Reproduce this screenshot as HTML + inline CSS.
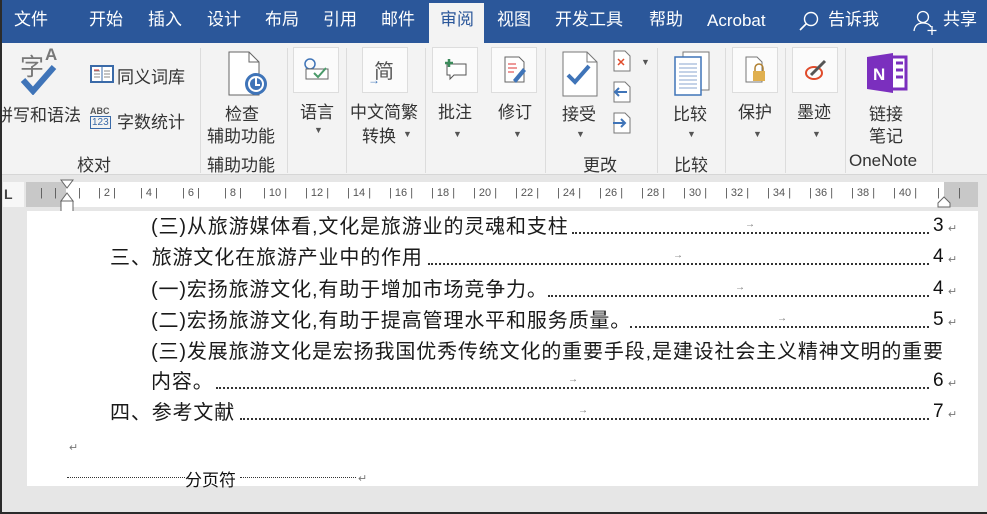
<!DOCTYPE html>
<html><head><meta charset="utf-8">
<style>
*{margin:0;padding:0;box-sizing:border-box}
body{width:987px;height:514px;overflow:hidden;background:#e6e6e6;font-family:"Liberation Sans","Noto Sans CJK SC",sans-serif;position:relative;color:#222}
.a{position:absolute;white-space:nowrap}
#tabs{position:absolute;left:0;top:0;width:987px;height:43px;background:#2b579a}
.t{position:absolute;top:8px;color:#fff;font-size:17px;line-height:24px;height:24px}
#act{position:absolute;left:429px;top:3px;width:55px;height:40px;background:#f3f3f3}
#rib{position:absolute;left:0;top:43px;width:987px;height:132px;background:#f3f3f3;border-bottom:1px solid #d6d6d6}
.r{position:absolute;font-size:17px;color:#333;white-space:nowrap}
.sep{position:absolute;top:5px;width:1px;height:125px;background:#dcdcdc}
.gl{position:absolute;top:108px;font-size:17px;color:#333}
.box{position:absolute;top:4px;width:46px;height:46px;background:#fbfbfb;border:1px solid #ddd}
.ar{position:absolute;font-size:9px;color:#555}
#ruler{position:absolute;left:26px;top:182px;width:952px;height:25px;background:#c8c8c8}
#rw{position:absolute;left:40px;top:0;width:878px;height:25px;background:#fff}
#page{position:absolute;left:27px;top:211px;width:951px;height:275px;background:#fff}
.l{position:absolute;font-size:20px;letter-spacing:0.85px;color:#1a1a1a;white-space:nowrap;height:26px;line-height:26px}
.ld{position:absolute;border-bottom:2px dotted #333;height:2px}
.pn{position:absolute;font-size:19px;color:#111}
.ret{position:absolute;font-size:11px;color:#777}
.tab{position:absolute;font-size:10px;color:#777}
</style></head><body>
<div style="position:absolute;left:0;top:0;width:2px;height:514px;background:#2b2b2b;z-index:5"></div>
<div style="position:absolute;left:0;top:512px;width:987px;height:2px;background:#2b2b2b;z-index:5"></div>
<div id="tabs">
<div id="act"></div>
<span class="t" style="left:14px">文件</span>
<span class="t" style="left:89px">开始</span>
<span class="t" style="left:148px">插入</span>
<span class="t" style="left:207px">设计</span>
<span class="t" style="left:265px">布局</span>
<span class="t" style="left:323px">引用</span>
<span class="t" style="left:381px">邮件</span>
<span class="t" style="left:440px;color:#2b579a">审阅</span>
<span class="t" style="left:497px">视图</span>
<span class="t" style="left:555px">开发工具</span>
<span class="t" style="left:649px">帮助</span>
<span class="t" style="left:707px;top:9px">Acrobat</span>
<svg class="a" style="left:797px;top:10px" width="24" height="22"><circle cx="14" cy="9" r="6.5" fill="none" stroke="#fff" stroke-width="1.4"/><line x1="9.5" y1="13.5" x2="3" y2="20" stroke="#fff" stroke-width="1.6"/></svg>
<span class="t" style="left:828px">告诉我</span>
<svg class="a" style="left:912px;top:9px" width="26" height="26"><circle cx="11" cy="8" r="5.5" fill="none" stroke="#fff" stroke-width="1.3"/><path d="M2 22 Q3 14 11 14 Q17 14 19 18" fill="none" stroke="#fff" stroke-width="1.3"/><path d="M20 17v9M15.5 21.5h9" stroke="#fff" stroke-width="1.3"/></svg>
<span class="t" style="left:943px">共享</span>
</div>

<div id="rib">
<span class="r" style="left:20px;top:4px;font-size:24px;color:#777">字</span><span class="r" style="left:45px;top:2px;font-size:17px;color:#777;font-weight:bold">A</span>
<svg class="a" style="left:20px;top:20px" width="38" height="32"><path d="M3 17 L13 28 L34 4" fill="none" stroke="#3f74b8" stroke-width="6"/></svg>
<span class="r" style="left:-4px;top:58px">拼写和语法</span>
<svg class="a" style="left:90px;top:22px" width="24" height="18"><rect x="1" y="1" width="22" height="16" fill="#fff" stroke="#3a6aa8" stroke-width="2"/><line x1="12" y1="1" x2="12" y2="17" stroke="#3a6aa8"/><path d="M4 6h6M4 9h6M4 12h6M14 6h6M14 9h6M14 12h6" stroke="#888"/><path d="M4 5h5" stroke="#d33"/></svg>
<span class="r" style="left:117px;top:20px">同义词库</span>
<span class="r" style="left:90px;top:63px;font-size:9px;color:#555;font-weight:bold">ABC</span>
<span class="r" style="left:90px;top:73px;font-size:10px;color:#3a6aa8;border:1px solid #3a6aa8;line-height:11px;padding:0 1px">123</span>
<span class="r" style="left:117px;top:65px">字数统计</span>
<span class="gl" style="left:77px">校对</span>
<div class="sep" style="left:200px"></div>
<svg class="a" style="left:227px;top:8px" width="42" height="46"><path d="M2 1h20l10 10v33H2z" fill="#fff" stroke="#666"/><path d="M22 1v10h10" fill="none" stroke="#666"/><circle cx="29" cy="33" r="11" fill="#3f74b8"/><circle cx="29" cy="33" r="7" fill="none" stroke="#fff" stroke-width="2"/><path d="M29 27v7h4" stroke="#fff" stroke-width="2" fill="none"/></svg>
<span class="r" style="left:225px;top:57px">检查</span>
<span class="r" style="left:207px;top:79px">辅助功能</span>
<span class="gl" style="left:207px">辅助功能</span>
<div class="sep" style="left:287px"></div>
<div class="box" style="left:293px"></div>
<svg class="a" style="left:303px;top:15px" width="28" height="24"><circle cx="7" cy="6" r="5" fill="none" stroke="#3f74b8" stroke-width="1.5"/><path d="M3 11h22v10H3z" fill="#fff" stroke="#666"/><path d="M11 15l4 4 8-9" stroke="#4a9a6a" stroke-width="2" fill="none"/></svg>
<span class="r" style="left:300px;top:55px">语言</span>
<span class="ar" style="left:314px;top:82px">▼</span>
<div class="sep" style="left:346px"></div>
<div class="box" style="left:362px"></div>
<span class="r" style="left:374px;top:12px;font-size:20px;color:#555">简</span>
<span class="r" style="left:368px;top:30px;font-size:12px;color:#3f74b8">→</span>
<span class="r" style="left:350px;top:55px">中文简繁</span>
<span class="r" style="left:362px;top:79px">转换</span><span class="ar" style="left:403px;top:86px">▼</span>
<div class="sep" style="left:425px"></div>
<div class="box" style="left:432px"></div>
<svg class="a" style="left:443px;top:15px" width="26" height="24"><path d="M4 6h19v11H11l-4 4v-4H4z" fill="#fff" stroke="#555"/><path d="M6 1v8M2 5h8" stroke="#3a8a5a" stroke-width="2.5"/></svg>
<span class="r" style="left:438px;top:55px">批注</span>
<span class="ar" style="left:453px;top:86px">▼</span>
<div class="box" style="left:491px"></div>
<svg class="a" style="left:503px;top:13px" width="24" height="28"><path d="M2 1h14l5 5v20H2z" fill="#fff" stroke="#666"/><path d="M5 8h8M5 12h9M5 16h6" stroke="#d33"/><path d="M10 24l10-12 3 3-10 12z" fill="#3f74b8"/></svg>
<span class="r" style="left:498px;top:55px">修订</span>
<span class="ar" style="left:513px;top:86px">▼</span>
<div class="sep" style="left:545px"></div>
<svg class="a" style="left:562px;top:8px" width="36" height="46"><path d="M1 1h24l10 10v34H1z" fill="#fff" stroke="#777"/><path d="M25 1v10h10" fill="none" stroke="#777"/><path d="M6 24l7 7 14-16" stroke="#3f74b8" stroke-width="4" fill="none"/></svg>
<span class="r" style="left:562px;top:57px">接受</span>
<span class="ar" style="left:576px;top:86px">▼</span>
<svg class="a" style="left:613px;top:7px" width="18" height="22"><path d="M1 1h11l5 5v15H1z" fill="#fff" stroke="#777"/><path d="M5 9l6 6M11 9l-6 6" stroke="#e04b2b" stroke-width="1.5"/></svg>
<span class="ar" style="left:641px;top:14px">▼</span>
<svg class="a" style="left:613px;top:38px" width="18" height="22"><path d="M1 1h11l5 5v15H1z" fill="#fff" stroke="#777"/><path d="M14 11H2M6 7l-4 4 4 4" stroke="#3f74b8" stroke-width="2" fill="none"/></svg>
<svg class="a" style="left:613px;top:69px" width="18" height="22"><path d="M1 1h11l5 5v15H1z" fill="#fff" stroke="#777"/><path d="M0 11h12M8 7l4 4-4 4" stroke="#3f74b8" stroke-width="2" fill="none"/></svg>
<span class="gl" style="left:583px">更改</span>
<div class="sep" style="left:657px"></div>
<svg class="a" style="left:673px;top:8px" width="38" height="46"><rect x="10" y="1" width="26" height="38" fill="#fff" stroke="#777"/><rect x="2" y="6" width="26" height="38" fill="#fff" stroke="#3f74b8" stroke-width="1.5"/><path d="M6 13h18M6 17h18M6 21h18M6 25h18M6 29h18M6 33h18M6 37h18" stroke="#8aa6cf"/></svg>
<span class="r" style="left:673px;top:57px">比较</span>
<span class="ar" style="left:687px;top:86px">▼</span>
<span class="gl" style="left:674px">比较</span>
<div class="sep" style="left:725px"></div>
<div class="box" style="left:732px"></div>
<svg class="a" style="left:745px;top:13px" width="22" height="28"><path d="M1 1h11l5 5v20H1z" fill="#fff" stroke="#777"/><rect x="8" y="15" width="12" height="10" fill="#e0b050"/><path d="M10 15v-3a4 4 0 0 1 8 0v3" fill="none" stroke="#b08030" stroke-width="1.5"/></svg>
<span class="r" style="left:738px;top:55px">保护</span>
<span class="ar" style="left:753px;top:86px">▼</span>
<div class="sep" style="left:785px"></div>
<div class="box" style="left:792px"></div>
<svg class="a" style="left:803px;top:15px" width="28" height="24"><ellipse cx="11" cy="15" rx="8" ry="6" fill="none" stroke="#e04b2b" stroke-width="2"/><path d="M8 17l14-14" stroke="#555" stroke-width="3"/></svg>
<span class="r" style="left:797px;top:55px">墨迹</span>
<span class="ar" style="left:812px;top:86px">▼</span>
<div class="sep" style="left:845px"></div>
<svg class="a" style="left:866px;top:10px" width="44" height="40"><rect x="16" y="4" width="24" height="32" fill="#fff" stroke="#7b2fbe" stroke-width="3"/><path d="M30 10h7M30 17h7M30 24h7" stroke="#7b2fbe" stroke-width="3"/><path d="M1 4l26-4v40L1 36z" fill="#7b2fbe"/><text x="7" y="27" font-family="Liberation Sans" font-weight="bold" font-size="17" fill="#fff">N</text></svg>
<span class="r" style="left:869px;top:57px">链接</span>
<span class="r" style="left:869px;top:79px">笔记</span>
<span class="gl" style="left:849px">OneNote</span>
<div class="sep" style="left:932px"></div>
</div>

<div style="position:absolute;left:3px;top:182px;width:21px;height:25px;background:#f7f7f7"></div>
<span class="a" style="left:4px;top:186px;font-size:14px;color:#444;font-weight:bold">L</span>
<div id="ruler"><div id="rw"></div></div>
<div class="a" style="left:26px;top:182px;width:952px;height:25px;font-size:11px;color:#555">
<span class="a" style="left:14px;top:5px">|</span><span class="a" style="left:28px;top:5px">|</span><span class="a" style="left:52px;top:5px">|</span>
<span class="a" style="left:72px;top:5px">|&nbsp;2&nbsp;|</span>
<span class="a" style="left:114px;top:5px">|&nbsp;4&nbsp;|</span>
<span class="a" style="left:156px;top:5px">|&nbsp;6&nbsp;|</span>
<span class="a" style="left:198px;top:5px">|&nbsp;8&nbsp;|</span>
<span class="a" style="left:237px;top:5px">|&nbsp;10&nbsp;|</span>
<span class="a" style="left:279px;top:5px">|&nbsp;12&nbsp;|</span>
<span class="a" style="left:321px;top:5px">|&nbsp;14&nbsp;|</span>
<span class="a" style="left:363px;top:5px">|&nbsp;16&nbsp;|</span>
<span class="a" style="left:405px;top:5px">|&nbsp;18&nbsp;|</span>
<span class="a" style="left:447px;top:5px">|&nbsp;20&nbsp;|</span>
<span class="a" style="left:489px;top:5px">|&nbsp;22&nbsp;|</span>
<span class="a" style="left:531px;top:5px">|&nbsp;24&nbsp;|</span>
<span class="a" style="left:573px;top:5px">|&nbsp;26&nbsp;|</span>
<span class="a" style="left:615px;top:5px">|&nbsp;28&nbsp;|</span>
<span class="a" style="left:657px;top:5px">|&nbsp;30&nbsp;|</span>
<span class="a" style="left:699px;top:5px">|&nbsp;32&nbsp;|</span>
<span class="a" style="left:741px;top:5px">|&nbsp;34&nbsp;|</span>
<span class="a" style="left:783px;top:5px">|&nbsp;36&nbsp;|</span>
<span class="a" style="left:825px;top:5px">|&nbsp;38&nbsp;|</span>
<span class="a" style="left:867px;top:5px">|&nbsp;40&nbsp;|</span>
<span class="a" style="left:911px;top:5px">|</span><span class="a" style="left:932px;top:5px">|</span>
</div>
<svg class="a" style="left:60px;top:179px" width="14" height="36"><path d="M1 1h12l-6 8z" fill="#fff" stroke="#666"/><path d="M7 14l6 8H1z" fill="#fff" stroke="#666"/><rect x="1" y="22" width="12" height="12" fill="#fff" stroke="#666"/></svg>
<svg class="a" style="left:937px;top:196px" width="14" height="12"><path d="M7 1l6 6v4H1V7z" fill="#fff" stroke="#666"/></svg>

<div id="page"></div>
<span class="l" style="left:151px;top:214px">(三)从旅游媒体看,文化是旅游业的灵魂和支柱</span>
<div class="ld" style="left:572px;top:232px;width:357px"></div>
<span class="pn" style="left:933px;top:215px">3</span><span class="ret" style="left:948px;top:222px">↵</span>
<span class="tab" style="left:745px;top:219px">→</span>

<span class="l" style="left:110px;top:245px">三、旅游文化在旅游产业中的作用</span>
<div class="ld" style="left:428px;top:263px;width:501px"></div>
<span class="pn" style="left:933px;top:246px">4</span><span class="ret" style="left:948px;top:253px">↵</span>
<span class="tab" style="left:673px;top:250px">→</span>

<span class="l" style="left:151px;top:277px">(一)宏扬旅游文化,有助于增加市场竞争力。</span>
<div class="ld" style="left:548px;top:295px;width:381px"></div>
<span class="pn" style="left:933px;top:278px">4</span><span class="ret" style="left:948px;top:285px">↵</span>
<span class="tab" style="left:735px;top:282px">→</span>

<span class="l" style="left:151px;top:308px">(二)宏扬旅游文化,有助于提高管理水平和服务质量。</span>
<div class="ld" style="left:630px;top:326px;width:299px"></div>
<span class="pn" style="left:933px;top:309px">5</span><span class="ret" style="left:948px;top:316px">↵</span>
<span class="tab" style="left:777px;top:313px">→</span>

<span class="l" style="left:151px;top:339px">(三)发展旅游文化是宏扬我国优秀传统文化的重要手段,是建设社会主义精神文明的重要</span>
<span class="l" style="left:151px;top:369px">内容。</span>
<div class="ld" style="left:216px;top:387px;width:713px"></div>
<span class="pn" style="left:933px;top:370px">6</span><span class="ret" style="left:948px;top:377px">↵</span>
<span class="tab" style="left:568px;top:374px">→</span>

<span class="l" style="left:110px;top:400px">四、参考文献</span>
<div class="ld" style="left:240px;top:418px;width:689px"></div>
<span class="pn" style="left:933px;top:401px">7</span><span class="ret" style="left:948px;top:408px">↵</span>
<span class="tab" style="left:578px;top:405px">→</span>

<span class="ret" style="left:69px;top:441px">↵</span>
<div class="a" style="left:67px;top:477px;width:118px;border-bottom:1px dotted #333"></div>
<span class="a" style="left:185px;top:466px;font-size:17px;color:#111">分页符</span>
<div class="a" style="left:240px;top:477px;width:116px;border-bottom:1px dotted #333"></div>
<span class="ret" style="left:358px;top:472px">↵</span>
</body></html>
